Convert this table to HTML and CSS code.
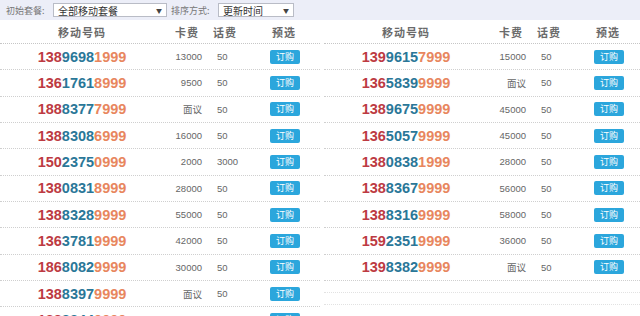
FILE: index.html
```html
<!DOCTYPE html>
<html lang="zh">
<head>
<meta charset="utf-8">
<title>选号</title>
<link rel="stylesheet" href="styles.css">
</head>
<body>
<div class="toolbar">
  <span class="label">初始套餐:</span>
  <div class="select sel-a"><span>全部移动套餐</span><span class="arrow">▼</span></div>
  <span class="label">排序方式:</span>
  <div class="select sel-b"><span>更新时间</span><span class="arrow">▼</span></div>
</div>
<div class="tables">
  <div class="table">
    <div class="row head"><div class="h-num">移动号码</div><div class="h-card">卡费</div><div class="h-talk">话费</div><div class="h-pick">预选</div></div>
    <div class="row"><div class="num"><b class="r">138</b><b class="b">9698</b><b class="o">1999</b></div><div class="card">13000</div><div class="talk">50</div><div class="pick"><span class="btn">订购</span></div></div>
    <div class="row"><div class="num"><b class="r">136</b><b class="b">1761</b><b class="o">8999</b></div><div class="card">9500</div><div class="talk">50</div><div class="pick"><span class="btn">订购</span></div></div>
    <div class="row"><div class="num"><b class="r">188</b><b class="b">8377</b><b class="o">7999</b></div><div class="card">面议</div><div class="talk">50</div><div class="pick"><span class="btn">订购</span></div></div>
    <div class="row"><div class="num"><b class="r">138</b><b class="b">8308</b><b class="o">6999</b></div><div class="card">16000</div><div class="talk">50</div><div class="pick"><span class="btn">订购</span></div></div>
    <div class="row"><div class="num"><b class="r">150</b><b class="b">2375</b><b class="o">0999</b></div><div class="card">2000</div><div class="talk">3000</div><div class="pick"><span class="btn">订购</span></div></div>
    <div class="row"><div class="num"><b class="r">138</b><b class="b">0831</b><b class="o">8999</b></div><div class="card">28000</div><div class="talk">50</div><div class="pick"><span class="btn">订购</span></div></div>
    <div class="row"><div class="num"><b class="r">138</b><b class="b">8328</b><b class="o">9999</b></div><div class="card">55000</div><div class="talk">50</div><div class="pick"><span class="btn">订购</span></div></div>
    <div class="row"><div class="num"><b class="r">136</b><b class="b">3781</b><b class="o">9999</b></div><div class="card">42000</div><div class="talk">50</div><div class="pick"><span class="btn">订购</span></div></div>
    <div class="row"><div class="num"><b class="r">186</b><b class="b">8082</b><b class="o">9999</b></div><div class="card">30000</div><div class="talk">50</div><div class="pick"><span class="btn">订购</span></div></div>
    <div class="row"><div class="num"><b class="r">138</b><b class="b">8397</b><b class="o">9999</b></div><div class="card">面议</div><div class="talk">50</div><div class="pick"><span class="btn">订购</span></div></div>
    <div class="row"><div class="num"><b class="r">138</b><b class="b">8344</b><b class="o">9999</b></div><div class="card">面议</div><div class="talk">50</div><div class="pick"><span class="btn">订购</span></div></div>
  </div>
  <div class="table right">
    <div class="row head"><div class="h-num">移动号码</div><div class="h-card">卡费</div><div class="h-talk">话费</div><div class="h-pick">预选</div></div>
    <div class="row"><div class="num"><b class="r">139</b><b class="b">9615</b><b class="o">7999</b></div><div class="card">15000</div><div class="talk">50</div><div class="pick"><span class="btn">订购</span></div></div>
    <div class="row"><div class="num"><b class="r">136</b><b class="b">5839</b><b class="o">9999</b></div><div class="card">面议</div><div class="talk">50</div><div class="pick"><span class="btn">订购</span></div></div>
    <div class="row"><div class="num"><b class="r">138</b><b class="b">9675</b><b class="o">9999</b></div><div class="card">45000</div><div class="talk">50</div><div class="pick"><span class="btn">订购</span></div></div>
    <div class="row"><div class="num"><b class="r">136</b><b class="b">5057</b><b class="o">9999</b></div><div class="card">45000</div><div class="talk">50</div><div class="pick"><span class="btn">订购</span></div></div>
    <div class="row"><div class="num"><b class="r">138</b><b class="b">0838</b><b class="o">1999</b></div><div class="card">28000</div><div class="talk">50</div><div class="pick"><span class="btn">订购</span></div></div>
    <div class="row"><div class="num"><b class="r">138</b><b class="b">8367</b><b class="o">9999</b></div><div class="card">56000</div><div class="talk">50</div><div class="pick"><span class="btn">订购</span></div></div>
    <div class="row"><div class="num"><b class="r">138</b><b class="b">8316</b><b class="o">9999</b></div><div class="card">58000</div><div class="talk">50</div><div class="pick"><span class="btn">订购</span></div></div>
    <div class="row"><div class="num"><b class="r">159</b><b class="b">2351</b><b class="o">9999</b></div><div class="card">36000</div><div class="talk">50</div><div class="pick"><span class="btn">订购</span></div></div>
    <div class="row"><div class="num"><b class="r">139</b><b class="b">8382</b><b class="o">9999</b></div><div class="card">面议</div><div class="talk">50</div><div class="pick"><span class="btn">订购</span></div></div>
    <div class="row faint"></div>
    <div class="row faint"></div>
  </div>
</div>
</body>
</html>
```
FILE: styles.css
```css
html, body {
  margin: 0;
  padding: 0;
  background: #ffffff;
  overflow: hidden;
  width: 640px;
  height: 316px;
  font-family: "Liberation Sans", "Noto Sans CJK SC", sans-serif;
}

.toolbar {
  height: 20px;
  background: #eceef8;
  display: flex;
  align-items: center;
  padding-left: 6px;
  box-sizing: border-box;
}

.label {
  font-family: "Noto Sans CJK SC", sans-serif;
  font-size: 9px;
  color: #777;
  width: 47px;
}

.select {
  height: 14px;
  background: #fff;
  border: 1px solid #b9bcc6;
  box-sizing: border-box;
  display: flex;
  align-items: center;
  justify-content: space-between;
  padding: 0 4px 0 4px;
  font-family: "Noto Sans CJK SC", sans-serif;
  font-size: 10px;
  color: #333;
  margin-right: 4px;
}

.sel-a { width: 114px; }
.sel-b { width: 76px; }

.arrow {
  font-size: 6px;
  color: #444;
}

.tables {
  display: flex;
}

.table {
  width: 320px;
  flex: none;
}

.table.right {
  margin-left: 4px;
}

.row {
  display: grid;
  grid-template-columns: 164px 38px 52px 62px;
  height: 26.33px;
  box-sizing: border-box;
  border-bottom: 1px dotted #cfcfcf;
  align-items: center;
}

.row.head {
  height: 24px;
  border-bottom: 1px dotted #c6c6c6;
  font-family: "Noto Sans CJK SC", sans-serif;
  font-size: 11px;
  font-weight: bold;
  color: #6a6a6a;
  letter-spacing: 1px;
}

.h-num { text-align: center; }
.h-card { text-align: right; padding-right: 3px; }
.h-talk { padding-left: 11px; }
.h-pick { text-align: center; padding-right: 2px; }

.num {
  text-align: center;
  font-size: 14.5px;
  font-weight: bold;
}

.num b { font-weight: bold; }
.r { color: #bd3a42; }
.b { color: #2a7798; }
.o { color: #e8865e; }

.card {
  text-align: right;
  font-size: 9.5px;
  color: #666;
}

.talk {
  padding-left: 15px;
  font-size: 9.5px;
  color: #666;
}

.pick {
  display: flex;
  justify-content: center;
}

.btn {
  display: block;
  width: 30px;
  height: 14px;
  line-height: 14px;
  background: #2ba6dc;
  color: #fff;
  border-radius: 2px;
  text-align: center;
  font-family: "Noto Sans CJK SC", sans-serif;
  font-size: 9px;
}

.row.faint {
  border-bottom: 1px dotted #e2e2e2;
  height: 12px;
}
```
